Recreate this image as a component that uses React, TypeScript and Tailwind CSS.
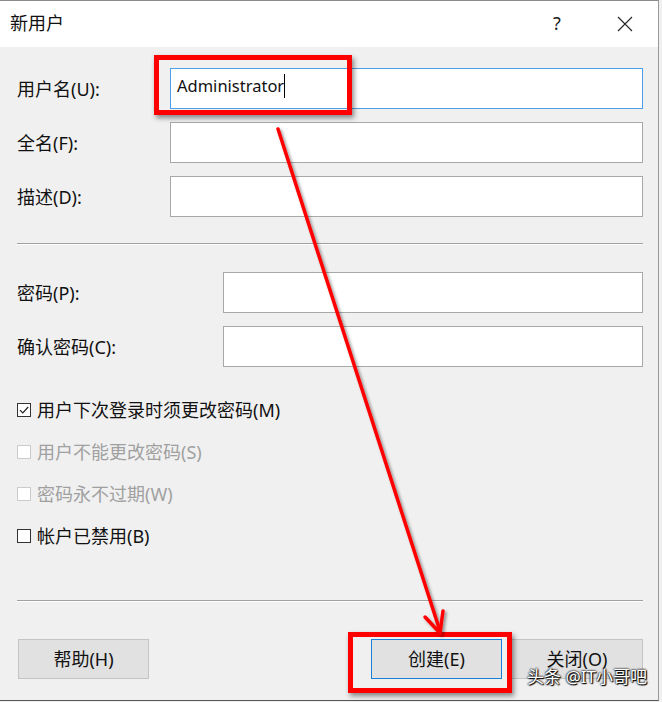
import { ReactNode } from 'react'

const font = { fontFamily: '"Noto Sans", "Noto Sans CJK SC", sans-serif' }

function Field({ label, labelW, focused, value }: { label: string; labelW: string; focused?: boolean; value?: string }) {
    return (
        <div className="flex items-center h-[41px]">
            <div className={`${labelW} shrink-0 pt-[2px]`}>{label}</div>
            <div
                className={`flex-1 h-full bg-white border flex items-center pl-[6px] pb-[5px] ${focused ? 'border-[#4c9ee6]' : 'border-[#a8a8a8]'}`}
            >
                {value && (
                    <span className="flex items-center text-[#111] text-[16.5px]">
                        {value}
                        <span className="inline-block w-px h-[24px] bg-black" />
                    </span>
                )}
            </div>
        </div>
    )
}

function Check({ label, checked, disabled }: { label: string; checked?: boolean; disabled?: boolean }) {
    return (
        <div className="flex items-center h-[42px]">
            <div
                className={`w-[14px] h-[14px] border bg-white flex items-center justify-center mr-[6px] ${disabled ? 'border-[#cccccc]' : 'border-[#333]'}`}
            >
                {checked && (
                    <svg width="12" height="12" viewBox="0 0 12 12">
                        <path d="M2 6.2 L4.8 9 L10.2 3" fill="none" stroke="#222" strokeWidth="1.2" />
                    </svg>
                )}
            </div>
            <span className={disabled ? 'text-[#a0a0a0]' : 'text-[#111]'}>{label}</span>
        </div>
    )
}

function Separator() {
    return (
        <div className="flex flex-col">
            <div className="h-px bg-[#a0a0a0]" />
            <div className="h-px bg-white" />
        </div>
    )
}

function Btn({ children, primary, w }: { children: ReactNode; primary?: boolean; w: string }) {
    return (
        <div
            className={`${w} h-[40px] bg-[#e1e1e1] border flex items-center justify-center text-[#111] ${primary ? 'border-[#1a7fd8]' : 'border-[#c4c4c4]'}`}
        >
            {children}
        </div>
    )
}

export default function App() {
    return (
        <div className="relative w-[662px] h-[702px] bg-[#f0f0f0] overflow-hidden text-[18px] text-[#111]" style={font}>
            <div className="w-[659px] h-[701px] flex flex-col border-t border-r border-b border-t-[#8a8a8a] border-r-[#9a9a9a] border-b-[#555]">
                {/* title bar */}
                <div className="h-[46px] bg-white flex items-center pl-[10px] shrink-0">
                    <span className="flex-1 pb-[2px]">新用户</span>
                    <span className="w-[20px] text-center mr-[50px] text-[18px] text-[#222] pb-[2px]">?</span>
                    <svg width="16" height="16" viewBox="0 0 16 16" className="mr-[25px]">
                        <path d="M1 1 L15 15 M15 1 L1 15" stroke="#222" strokeWidth="1.1" />
                    </svg>
                </div>

                <div className="flex-1 flex flex-col pl-[17px] pr-[15px] pt-[21px]">
                    <div className="flex flex-col gap-[13px]">
                        <Field label="用户名(U):" labelW="w-[153px]" focused value="Administrator" />
                        <Field label="全名(F):" labelW="w-[153px]" />
                        <Field label="描述(D):" labelW="w-[153px]" />
                    </div>

                    <div className="mt-[26px]">
                        <Separator />
                    </div>

                    <div className="flex flex-col gap-[13px] mt-[27px]">
                        <Field label="密码(P):" labelW="w-[206px]" />
                        <Field label="确认密码(C):" labelW="w-[206px]" />
                    </div>

                    <div className="flex flex-col mt-[22px]">
                        <Check label="用户下次登录时须更改密码(M)" checked />
                        <Check label="用户不能更改密码(S)" disabled />
                        <Check label="密码永不过期(W)" disabled />
                        <Check label="帐户已禁用(B)" />
                    </div>

                    <div className="mt-[43px]">
                        <Separator />
                    </div>

                    <div className="flex items-center mt-[37px] pl-px">
                        <Btn w="w-[131px]">帮助(H)</Btn>
                        <div className="flex-1" />
                        <Btn w="w-[131px]" primary>创建(E)</Btn>
                        <div className="w-[9px]" />
                        <Btn w="w-[132px]">关闭(O)</Btn>
                    </div>
                </div>
            </div>

            {/* annotations */}
            <div className="absolute left-[154px] top-[55px] w-[198px] h-[60px] border-[5px] border-[#ff0000] shadow-[2px_3px_5px_rgba(0,0,0,0.45)]" />
            <div className="absolute left-[348px] top-[632px] w-[164px] h-[61px] border-[5px] border-[#ff0000] shadow-[2px_3px_5px_rgba(0,0,0,0.45)]" />
            <svg className="absolute inset-0 pointer-events-none" width="662" height="702" viewBox="0 0 662 702">
                <defs>
                    <filter id="sh" x="-10%" y="-10%" width="120%" height="120%">
                        <feDropShadow dx="2" dy="2" stdDeviation="1.5" floodColor="#000" floodOpacity="0.4" />
                    </filter>
                </defs>
                <g filter="url(#sh)" stroke="#ff0000" strokeWidth="3.5" fill="none" strokeLinecap="round" strokeLinejoin="round">
                    <path d="M278 129 L440 631" />
                    <path d="M425 617 L440 633 L443 611" />
                </g>
            </svg>
            <div className="absolute left-[527px] top-[668px] text-[17px] text-white leading-none [text-shadow:0_0_2px_#000,0_0_2px_#000,1px_1px_1px_#000]">
                头条 @IT小哥吧
            </div>
        </div>
    )
}
